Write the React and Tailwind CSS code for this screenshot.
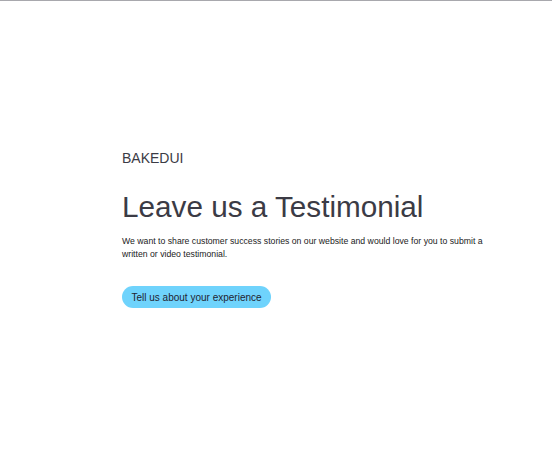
import React from 'react'

export default function App() {
  return (
    <div className="min-h-[450px] bg-white border-t border-[#a8a8ad] font-['Liberation_Sans',Arial,sans-serif]">
      <div className="pl-[122px] pr-[50px] pt-[148px]">
        <div className="text-[14px] leading-[18px] text-[#3b3b45]">BAKEDUI</div>
        <h1 className="mt-[22px] text-[29.7px] leading-[36px] text-[#3b3b45]">Leave us a Testimonial</h1>
        <p className="mt-[10px] max-w-[375px] text-[8.7px] leading-[12.5px] text-[#222]">
          We want to share customer success stories on our website and would love for you to submit a written or video testimonial.
        </p>
        <button className="mt-[26px] h-[22px] px-[9.5px] rounded-full bg-[#6fd3fc] text-[10px] text-[#1f2430]">
          Tell us about your experience
        </button>
      </div>
    </div>
  )
}
